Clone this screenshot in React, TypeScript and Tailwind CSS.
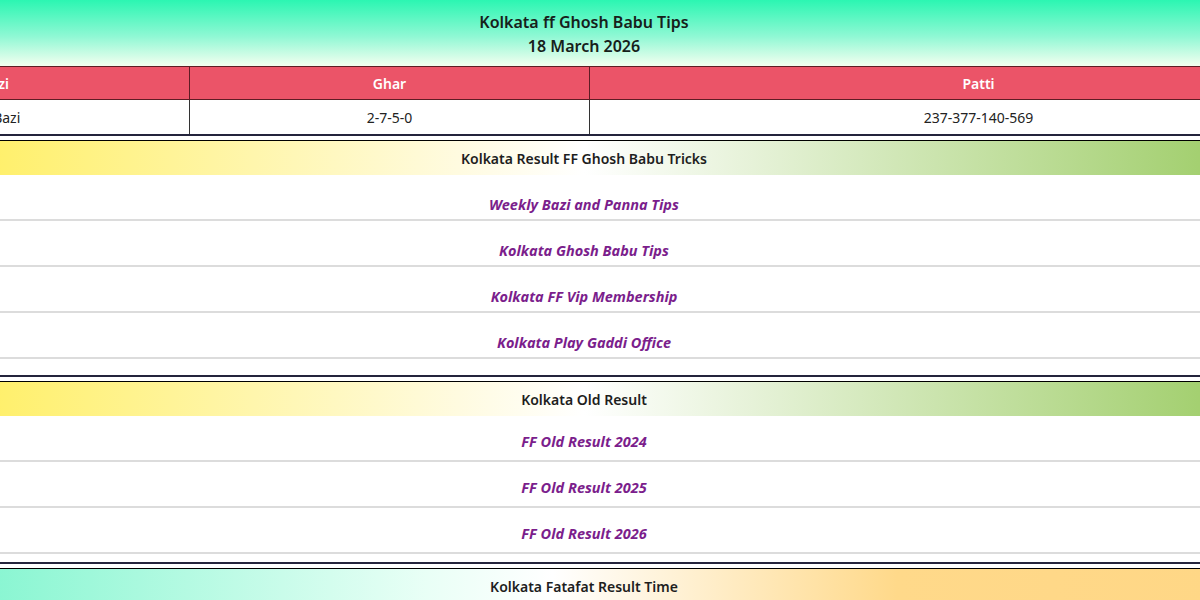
import React from 'react';

const font = { fontFamily: '"Noto Sans", "Open Sans", Arial, sans-serif' };

interface LinkRowProps {
  label: string;
  tight?: boolean;
}

function LinkRow({ label, tight }: LinkRowProps) {
  return (
    <div
      className={`border-b-2 border-[#dcdcdc] text-center text-[14.5px] leading-[17px] ${tight ? 'pt-[17px] pb-[10px]' : 'pt-[21px] pb-[6px]'}`}
    >
      <a className="font-bold italic text-[#7b1e8c]">{label}</a>
    </div>
  );
}

interface SectionBarProps {
  title: string;
  variant?: 'green' | 'orange';
}

function SectionBar({ title, variant = 'green' }: SectionBarProps) {
  const bg =
    variant === 'green'
      ? 'bg-[linear-gradient(90deg,#ffeb3b_0%,#fffbe0_42%,#ffffff_50%,#8bc34a_100%)]'
      : 'bg-[linear-gradient(90deg,#5ff2c2_0%,#e9fff6_40%,#ffffff_48%,#ffd98a_70%,#ffd684_100%)]';
  return (
    <div className="pt-[4px]">
      <div className="border-t border-black">
        <div className={`${bg} h-[34px] flex items-center justify-center text-[14px] font-semibold text-[#1e1e1e]`}>
          {title}
        </div>
      </div>
    </div>
  );
}

export default function App() {
  return (
    <div className="w-[1200px] h-[600px] overflow-hidden bg-white" style={font}>
      <div className="w-[1566px] ml-[-199px]">
        {/* header */}
        <div className="h-[66px] bg-[linear-gradient(180deg,#2bf6b2_0%,#8ff8d4_55%,#f4fff0_100%)] flex flex-col items-center justify-center pt-[1px]">
          <div className="text-[16px] leading-[24px] font-semibold text-[#16201a]">Kolkata ff Ghosh Babu Tips</div>
          <div className="text-[16px] leading-[24px] font-semibold text-[#16201a]">18 March 2026</div>
        </div>

        {/* today table */}
        <div className="border-b-2 border-[#24243c]">
          <div className="grid grid-cols-[388px_400px_1fr]">
            <div className="h-[34px] bg-[#eb5468] border-y border-[#5e1c24] flex items-center justify-center text-[14px] font-semibold text-white">Bazi</div>
            <div className="h-[34px] bg-[#eb5468] border-y border-l border-[#5e1c24] flex items-center justify-center text-[14px] font-semibold text-white">Ghar</div>
            <div className="h-[34px] bg-[#eb5468] border-y border-l border-[#5e1c24] flex items-center justify-center text-[14px] font-semibold text-white">Patti</div>
            <div className="h-[34px] flex items-center justify-center text-[14px] text-[#222]">1st Bazi</div>
            <div className="h-[34px] border-l border-[#333] flex items-center justify-center text-[14px] text-[#222]">2-7-5-0</div>
            <div className="h-[34px] border-l border-[#333] flex items-center justify-center text-[14px] text-[#222]">237-377-140-569</div>
          </div>
        </div>

        {/* tricks */}
        <SectionBar title="Kolkata Result FF Ghosh Babu Tricks" />
        <LinkRow label="Weekly Bazi and Panna Tips" />
        <LinkRow label="Kolkata Ghosh Babu Tips" />
        <LinkRow label="Kolkata FF Vip Membership" />
        <LinkRow label="Kolkata Play Gaddi Office" />

        {/* old results */}
        <div className="mt-[16px] border-b-2 border-[#24243c]" />
        <SectionBar title="Kolkata Old Result" />
        <LinkRow label="FF Old Result 2024" tight />
        <LinkRow label="FF Old Result 2025" tight />
        <LinkRow label="FF Old Result 2026" tight />

        {/* result time */}
        <div className="mt-[8px] border-b-2 border-[#24243c]" />
        <SectionBar title="Kolkata Fatafat Result Time" variant="orange" />
      </div>
    </div>
  );
}
